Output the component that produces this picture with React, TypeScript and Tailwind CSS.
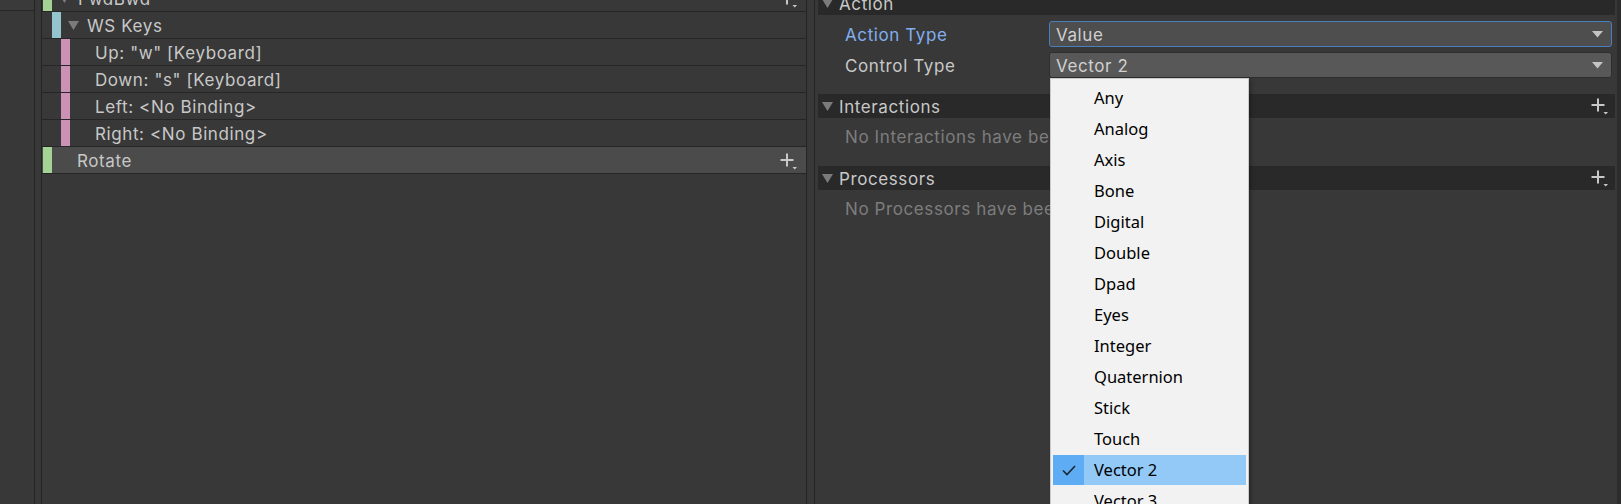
import React from "react";

const Tri = () => (
  <svg width="11" height="9" viewBox="0 0 11 9" className="shrink-0">
    <path d="M0 0H11L5.5 9Z" fill="#7b7b7b" />
  </svg>
);

const Arrow = () => (
  <svg width="11" height="7" viewBox="0 0 11 7" className="shrink-0">
    <path d="M0 0H11L5.5 6.5Z" fill="#c4c4c4" />
  </svg>
);

const Plus = () => (
  <svg width="18" height="17" viewBox="0 0 18 17" className="shrink-0">
    <path d="M7 0.5V13.5M0.5 7H13.5" stroke="#c8c8c8" strokeWidth="2" />
    <path d="M12.5 14H17L14.75 16.5Z" fill="#c8c8c8" />
  </svg>
);

const Check = () => (
  <svg width="14" height="11" viewBox="0 0 14 11">
    <path d="M1 5.5L5 9.5L13 1" stroke="#1c2631" strokeWidth="1.6" fill="none" />
  </svg>
);

type RowProps = {
  indent: number;
  color: string;
  tri?: boolean;
  text: string;
  plus?: boolean;
  selected?: boolean;
};

function Row({ indent, color, tri, text, plus, selected }: RowProps) {
  return (
    <div
      className={
        "flex h-[27px] shrink-0 border-b border-[#262626] " +
        (selected ? "bg-[#4b4b4b]" : "bg-[#383838]")
      }
    >
      <div style={{ width: indent }} className="shrink-0" />
      <div className="w-[9px] shrink-0" style={{ background: color }} />
      {tri ? (
        <div className="flex items-center pl-[7px] pr-[8px]">
          <Tri />
        </div>
      ) : (
        <div className="w-[25px] shrink-0" />
      )}
      <div className="flex-1 flex items-center pt-[2px] text-[17px] tracking-[0.6px] text-[#c8c8c8] leading-none whitespace-nowrap">
        {text}
      </div>
      {plus && (
        <div className="flex items-center pr-[8px] pt-[2px]">
          <Plus />
        </div>
      )}
    </div>
  );
}

const items = [
  "Any",
  "Analog",
  "Axis",
  "Bone",
  "Digital",
  "Double",
  "Dpad",
  "Eyes",
  "Integer",
  "Quaternion",
  "Stick",
  "Touch",
  "Vector 2",
  "Vector 3",
];

export default function App() {
  const green = "#a4d495";
  const blue = "#94c4ce";
  const pink = "#cc92b6";
  return (
    <div className="relative w-[1621px] h-[504px] overflow-hidden bg-[#383838] flex font-['Inter',sans-serif]">
      {/* leftmost column */}
      <div className="w-[35px] shrink-0 border-r border-[#242424] flex flex-col">
        <div className="h-[11px] border-b border-[#262626] bg-[#3a3a3a]" />
      </div>
      <div className="w-[6px] shrink-0" />
      {/* actions tree */}
      <div className="w-[766px] shrink-0 border-l border-r border-[#242424] flex flex-col">
        <div className="flex flex-col mt-[-15px]">
          <Row indent={1} color={green} tri text="FwdBwd" plus />
          <Row indent={10} color={blue} tri text="WS Keys" />
          <Row indent={19} color={pink} text={'Up: "w" [Keyboard]'} />
          <Row indent={19} color={pink} text={'Down: "s" [Keyboard]'} />
          <Row indent={19} color={pink} text="Left: <No Binding>" />
          <Row indent={19} color={pink} text="Right: <No Binding>" />
          <Row indent={1} color={green} text="Rotate" plus selected />
        </div>
      </div>
      <div className="w-[7px] shrink-0" />
      {/* properties */}
      <div className="flex-1 flex border-l border-[#242424]">
        <div className="flex-1 flex flex-col pl-[3px] pr-[2px] text-[17px] tracking-[0.6px] leading-none">
          <div className="h-[24px] mt-[-9px] bg-[#292929] flex items-center pl-[4px] shrink-0">
            <Tri />
            <span className="ml-[6px] pt-[2px] text-[#c8c8c8]">Action</span>
          </div>
          <div className="h-[26px] mt-[6px] flex items-center shrink-0">
            <div className="w-[231px] pl-[27px] pt-[2px] text-[#82aef0] shrink-0">Action Type</div>
            <div className="w-[563px] h-[26px] rounded-[3px] bg-[#4e4e4e] border border-[#4a7fbd] flex items-center pl-[6px] pr-[8px]">
              <span className="flex-1 pt-[2px] text-[#d0d0d0]">Value</span>
              <Arrow />
            </div>
          </div>
          <div className="h-[26px] mt-[5px] flex items-center shrink-0">
            <div className="w-[231px] pl-[27px] pt-[2px] text-[#c8c8c8] shrink-0">Control Type</div>
            <div className="w-[563px] h-[26px] rounded-[3px] bg-[#585858] border border-[#2e2e2e] flex items-center pl-[6px] pr-[8px]">
              <span className="flex-1 pt-[2px] text-[#d0d0d0]">Vector 2</span>
              <Arrow />
            </div>
          </div>
          <div className="h-[24px] mt-[16px] bg-[#292929] flex items-center pl-[4px] pr-[6px] shrink-0">
            <Tri />
            <span className="ml-[6px] pt-[2px] flex-1 text-[#c8c8c8]">Interactions</span>
            <Plus />
          </div>
          <div className="h-[48px] pt-[11px] pl-[27px] text-[#7d7d7d] shrink-0">
            No Interactions have been added.
          </div>
          <div className="h-[24px] bg-[#292929] flex items-center pl-[4px] pr-[6px] shrink-0">
            <Tri />
            <span className="ml-[6px] pt-[2px] flex-1 text-[#c8c8c8]">Processors</span>
            <Plus />
          </div>
          <div className="pt-[11px] pl-[27px] text-[#7d7d7d]">No Processors have been added.</div>
        </div>
        <div className="w-[4px] bg-[#2c2c2c] shrink-0" />
      </div>

      {/* popup */}
      <div className="absolute left-[1050px] top-[78px] w-[199px] h-[460px] bg-[#f2f2f2] border border-[#c9c9c9] pt-[4px] flex flex-col gap-[1px] font-['Noto_Sans',sans-serif] shadow-[2px_2px_4px_rgba(0,0,0,0.3)]">
        {items.map((it) => {
          const sel = it === "Vector 2";
          return (
            <div
              key={it}
              className={
                "ml-[2px] w-[193px] h-[30px] flex items-center shrink-0 " +
                (sel ? "bg-[#93c9f7]" : "")
              }
            >
              <div
                className={
                  "w-[31px] h-full flex items-center justify-center shrink-0 " +
                  (sel ? "bg-[#5eacf3]" : "")
                }
              >
                {sel && <Check />}
              </div>
              <span className="pl-[10px] pt-[1px] text-[16.5px] text-black leading-none">{it}</span>
            </div>
          );
        })}
      </div>
    </div>
  );
}
